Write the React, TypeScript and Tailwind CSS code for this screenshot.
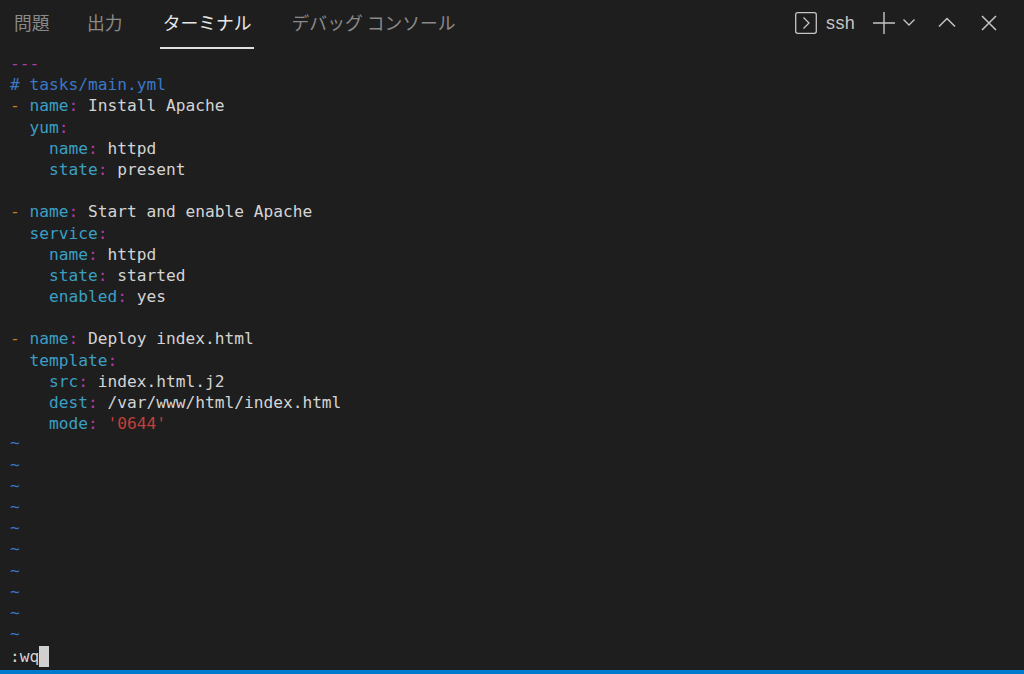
const KEY = "text-[#3b9fc4]";
const COLON = "text-[#b03aa6]";
const VAL = "text-[#d4d4d4]";

function Kv({ indent, k, v, dash, red }: { indent?: number; k: string; v?: string; dash?: boolean; red?: boolean }) {
  return (
    <div className="h-[21.2px] whitespace-pre">
      {dash ? <span className="text-[#d9791a]">- </span> : " ".repeat(indent ?? 0)}
      <span className={KEY}>{k}</span>
      <span className={COLON}>:</span>
      {v && <span className={red ? "text-[#c2403a]" : VAL}> {v}</span>}
    </div>
  );
}

function Blank() {
  return <div className="h-[21.2px]" />;
}

function Tab({ label, active }: { label: string; active?: boolean }) {
  return (
    <div className={`flex h-[49px] items-center border-b-2 pb-[3px] ${active ? "border-[#e0e0e0] text-[#e7e7e7]" : "border-transparent text-[#8a8a8a]"}`}>
      <span className={active ? "px-[2.5px]" : ""}>{label}</span>
    </div>
  );
}

export default function App() {
  return (
    <div className="flex h-[674px] w-[1024px] flex-col overflow-hidden bg-[#1e1e1e]">
      <div className="flex h-[49px] shrink-0 items-center justify-between pl-[14px] pr-[27px] font-['Noto_Sans_CJK_JP',sans-serif] text-[17.8px]">
        <div className="flex items-center gap-[37.5px]">
          <Tab label="問題" />
          <Tab label="出力" />
          <Tab label="ターミナル" active />
          <Tab label="デバッグ コンソール" />
        </div>
        <div className="flex items-center pb-[4px] text-[#c5c5c5]">
          <svg width="24" height="24" viewBox="0 0 24 24" fill="none" stroke="currentColor" strokeWidth="1.3">
            <rect x="1.7" y="1.7" width="20.6" height="20.6" rx="2" />
            <path d="M9.5 6.5 15 12l-5.5 5.5" />
          </svg>
          <span className="ml-[8px] mt-[2px] font-['Liberation_Sans',sans-serif] text-[18px] font-medium tracking-[0.3px]">ssh</span>
          <svg className="ml-[18px]" width="22" height="22" viewBox="0 0 22 22" fill="none" stroke="currentColor" strokeWidth="1.4">
            <path d="M11 0v22M0 11h22" />
          </svg>
          <svg className="ml-[7px]" width="14" height="9" viewBox="0 0 14 9" fill="none" stroke="currentColor" strokeWidth="1.3">
            <path d="M1.500 1.500 7 7l5.500-5.500" />
          </svg>
          <svg className="ml-[22px]" width="18" height="11" viewBox="0 0 18 11" fill="none" stroke="currentColor" strokeWidth="1.5">
            <path d="M1 9.500 9 1.500l8 8" />
          </svg>
          <svg className="ml-[25px]" width="16" height="16" viewBox="0 0 16 16" fill="none" stroke="currentColor" strokeWidth="1.5">
            <path d="M1 1l14 14M15 1 1 15" />
          </svg>
        </div>
      </div>
      <div className="min-h-0 flex-1 pl-[10px] pt-[4px] font-['DejaVu_Sans_Mono',monospace] text-[16.2px] leading-[21.2px]">
        <div className="h-[21.2px] text-[#b03aa6]">---</div>
        <div className="h-[21.2px] whitespace-pre text-[#3a78c6]"># tasks/main.yml</div>
        <Kv dash k="name" v="Install Apache" />
        <Kv indent={2} k="yum" />
        <Kv indent={4} k="name" v="httpd" />
        <Kv indent={4} k="state" v="present" />
        <Blank />
        <Kv dash k="name" v="Start and enable Apache" />
        <Kv indent={2} k="service" />
        <Kv indent={4} k="name" v="httpd" />
        <Kv indent={4} k="state" v="started" />
        <Kv indent={4} k="enabled" v="yes" />
        <Blank />
        <Kv dash k="name" v="Deploy index.html" />
        <Kv indent={2} k="template" />
        <Kv indent={4} k="src" v="index.html.j2" />
        <Kv indent={4} k="dest" v="/var/www/html/index.html" />
        <Kv indent={4} k="mode" v="'0644'" red />
        {Array.from({ length: 10 }).map((_, i) => (
          <div key={i} className="h-[21.2px] -translate-y-[2px] text-[#3a78c6]">~</div>
        ))}
        <div className="flex h-[21.2px] text-[#d4d4d4]">
          <span>:wq</span>
          <span className="h-[21.2px] w-[10px] bg-[#d0d0d0]" />
        </div>
      </div>
      <div className="h-[4px] shrink-0 bg-[#007acc]" />
    </div>
  );
}
